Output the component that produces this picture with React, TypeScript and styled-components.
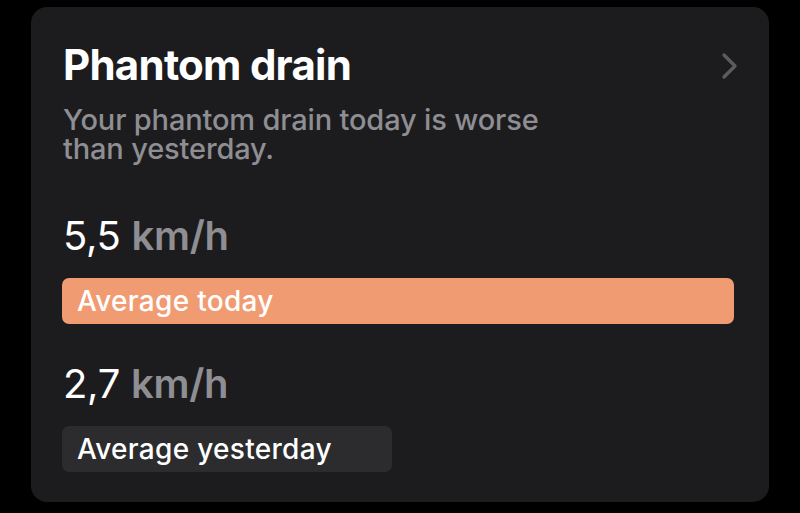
import React from 'react'
import styled, { createGlobalStyle } from 'styled-components'

const GlobalStyle = createGlobalStyle`
  html, body {
    margin: 0;
    background: #000;
    font-family: Inter, "Noto Sans", "Liberation Sans", sans-serif;
    -webkit-font-smoothing: antialiased;
  }
`

const Page = styled.div`
  padding: 7px 31px 13px 31px;
`

const Card = styled.div`
  background: #1c1c1e;
  border-radius: 16px;
  padding: 34px 35px 30px 31px;
`

const Header = styled.div`
  display: flex;
  justify-content: space-between;
  align-items: flex-start;
  padding-left: 1px;
`

const Title = styled.h1`
  margin: 0;
  color: #fff;
  font-size: 42px;
  line-height: 48px;
  font-weight: 700;
  letter-spacing: -0.75px;
`

const Chevron = styled.svg`
  width: 20px;
  height: 28px;
  margin-top: 11px;
  margin-right: -4px;
`

const Subtitle = styled.p`
  margin: 16px 0 0 1px;
  max-width: 500px;
  color: #8e8e93;
  font-size: 29px;
  line-height: 29px;
  font-weight: 500;
  letter-spacing: -0.15px;
`

const Stat = styled.div<{ $gap: number }>`
  margin-top: ${p => p.$gap}px;
`

const Value = styled.div`
  padding-left: 1px;
  color: #fff;
  font-size: 40px;
  line-height: 46px;
  font-weight: 400;
  letter-spacing: -0.3px;
`

const Unit = styled.span`
  color: #8e8e93;
  font-weight: 600;
`

const Bar = styled.div<{ $tone: 'accent' | 'muted' }>`
  box-sizing: border-box;
  margin-top: 19px;
  height: 46px;
  border-radius: 7px;
  background: ${p => (p.$tone === 'accent' ? '#f09b71' : '#2c2c2e')};
  display: flex;
  align-items: center;
  padding-left: 15px;
  color: #fff;
  font-size: 28px;
  font-weight: 500;
  letter-spacing: 0.3px;
  white-space: nowrap;
`

const stats = [
  { value: 5.5, label: 'Average today', tone: 'accent' as const },
  { value: 2.7, label: 'Average yesterday', tone: 'muted' as const },
]

const max = Math.max(...stats.map(s => s.value))

export default function App() {
  return (
    <Page>
      <GlobalStyle />
      <Card>
        <Header>
          <Title>Phantom drain</Title>
          <Chevron viewBox="0 0 20 28" fill="none">
            <path
              d="M6 3 L17 14 L6 25"
              stroke="#5b5b60"
              strokeWidth="3.4"
              strokeLinecap="round"
              strokeLinejoin="round"
            />
          </Chevron>
        </Header>
        <Subtitle>Your phantom drain today is worse than yesterday.</Subtitle>
        {stats.map((s, i) => (
          <Stat key={s.label} $gap={i === 0 ? 50 : 37}>
            <Value>
              {s.value.toFixed(1).replace('.', ',')} <Unit>km/h</Unit>
            </Value>
            <Bar $tone={s.tone} style={{ width: `${(s.value / max) * 100}%` }}>
              {s.label}
            </Bar>
          </Stat>
        ))}
      </Card>
    </Page>
  )
}
